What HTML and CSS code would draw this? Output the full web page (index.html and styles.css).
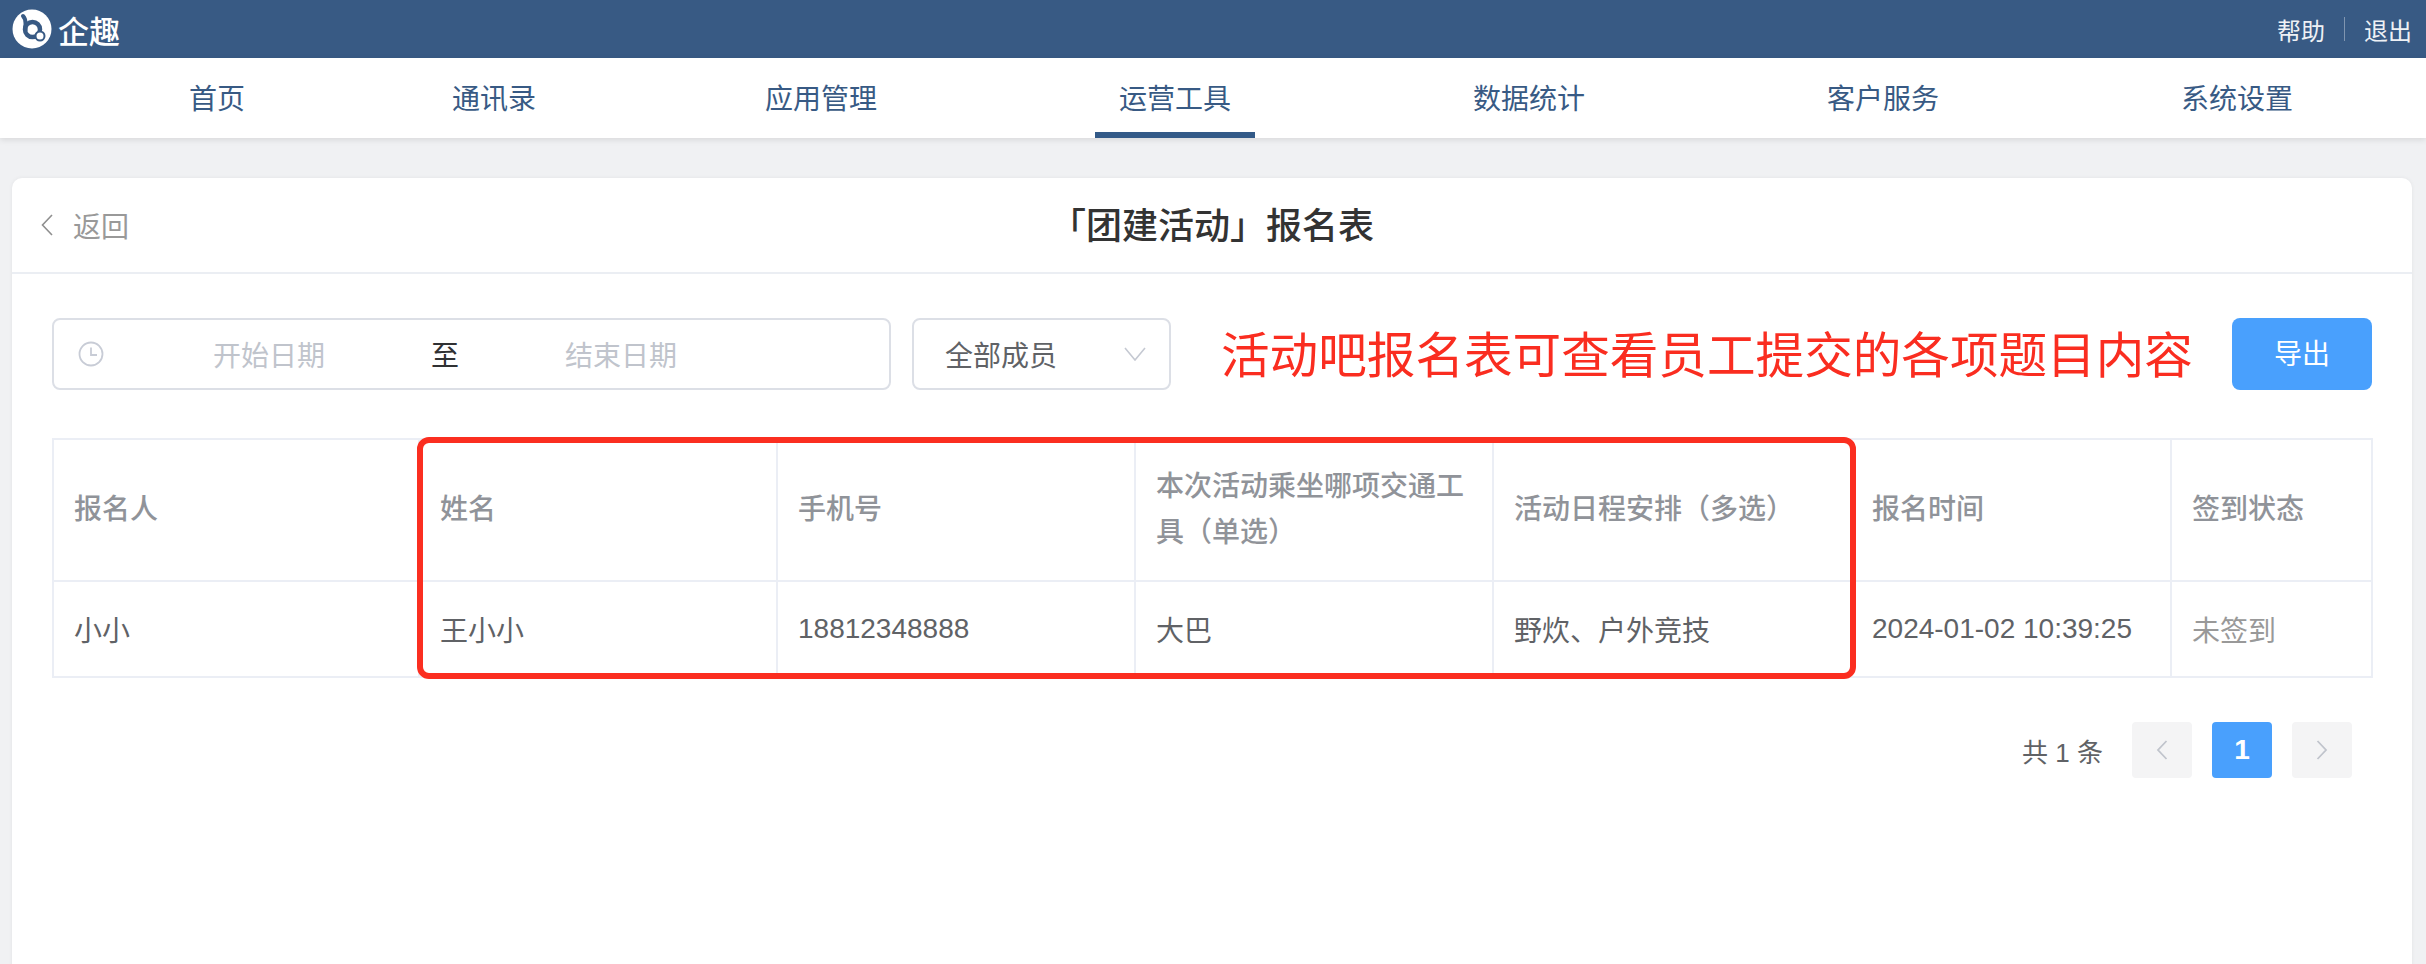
FILE: index.html
```html
<!DOCTYPE html>
<html lang="zh-CN">
<head>
    <meta charset="UTF-8">
    <title>「团建活动」报名表</title>
    <link rel="stylesheet" href="styles.css">
</head>
<body>
<div class="topbar">
    <div class="brand">
        <svg class="brandLogo" width="40" height="40" viewBox="0 0 40 40">
            <circle cx="20" cy="20" r="19.5" fill="#fff"/>
            <path d="M11 7 C13 9 13.5 11 13.5 14 L13.5 21" fill="none" stroke="#385a84" stroke-width="4" stroke-linecap="round"/>
            <circle cx="20.5" cy="20.5" r="7.5" fill="none" stroke="#385a84" stroke-width="4.5"/>
            <circle cx="28" cy="27" r="4.5" fill="#fff" stroke="#385a84" stroke-width="2"/>
        </svg>
        <span>企趣</span>
    </div>
    <div class="topLinks">
        <a>帮助</a><i></i><a>退出</a>
    </div>
</div>
<ul class="nav">
    <li class="navHome">首页</li>
    <li class="navContacts">通讯录</li>
    <li>应用管理</li>
    <li class="active"><span>运营工具</span></li>
    <li>数据统计</li>
    <li>客户服务</li>
    <li>系统设置</li>
</ul>
<div class="card">
    <div class="cardHead">
        <a class="back">
            <svg width="12" height="22" viewBox="0 0 12 22"><path d="M11 1 L1.5 11 L11 21" fill="none" stroke="#8f8f8f" stroke-width="1.6"/></svg>
            <span>返回</span>
        </a>
        <h1>「团建活动」报名表</h1>
    </div>
    <div class="cardBody">
        <div class="toolbar">
            <div class="dateRange">
                <svg class="clock" width="26" height="26" viewBox="0 0 26 26"><circle cx="13" cy="13" r="11.5" fill="none" stroke="#c8ccd6" stroke-width="1.8"/><path d="M13 6.5 V14 H19" fill="none" stroke="#c8ccd6" stroke-width="1.8"/></svg>
                <span class="dateHolder dateStart">开始日期</span>
                <span class="dateTo">至</span>
                <span class="dateHolder">结束日期</span>
            </div>
            <div class="select">
                <span>全部成员</span>
                <svg width="22" height="14" viewBox="0 0 22 14"><path d="M1 1 L11 13 L21 1" fill="none" stroke="#c5c9d2" stroke-width="1.6"/></svg>
            </div>
            <div class="notice">活动吧报名表可查看员工提交的各项题目内容</div>
            <a class="btnExport">导出</a>
        </div>
        <div class="tableWrap">
            <table>
                <colgroup>
                    <col class="c1"><col class="c2"><col class="c3"><col class="c4"><col class="c5"><col class="c6"><col class="c7">
                </colgroup>
                <tr class="headRow">
                    <th>报名人</th>
                    <th>姓名</th>
                    <th>手机号</th>
                    <th>本次活动乘坐哪项交通工具（单选）</th>
                    <th>活动日程安排（多选）</th>
                    <th>报名时间</th>
                    <th>签到状态</th>
                </tr>
                <tr class="bodyRow">
                    <td>小小</td>
                    <td>王小小</td>
                    <td>18812348888</td>
                    <td>大巴</td>
                    <td>野炊、户外竞技</td>
                    <td>2024-01-02 10:39:25</td>
                    <td class="muted">未签到</td>
                </tr>
            </table>
            <div class="redBox"></div>
        </div>
        <div class="pager">
            <span class="total">共 1 条</span>
            <a class="pageBtn"><svg width="12" height="22" viewBox="0 0 12 22"><path d="M10.5 2 L2 11 L10.5 20" fill="none" stroke="#c0c4cc" stroke-width="1.8"/></svg></a>
            <a class="pageBtn current">1</a>
            <a class="pageBtn"><svg width="12" height="22" viewBox="0 0 12 22"><path d="M1.5 2 L10 11 L1.5 20" fill="none" stroke="#c0c4cc" stroke-width="1.8"/></svg></a>
        </div>
    </div>
</div>
</body>
</html>
```

FILE: styles.css
```css
html,body{margin:0;padding:0;}
body{width:2426px;height:964px;overflow:hidden;background:#f0f1f3;font-family:"Liberation Sans","Noto Sans CJK SC",sans-serif;font-size:28px;color:#606266;}

.topbar{height:58px;background:#385a84;display:flex;justify-content:space-between;align-items:center;color:#fff;}
.brand{display:flex;align-items:center;padding-left:12px;font-size:31px;font-weight:500;}
.brandLogo{margin-right:6px;}
.topLinks{display:flex;align-items:center;padding-right:14px;font-size:24px;color:#eef1f5;}
.topLinks i{width:1px;height:24px;background:#7f95b0;margin:0 19px;}

.nav{display:flex;list-style:none;margin:0;padding:0 0 0 90px;height:80px;background:#fff;box-shadow:0 2px 6px rgba(0,0,0,.1);position:relative;color:#385a84;}
.nav li{width:354px;text-align:center;line-height:84px;}
.nav li.navHome{width:254px;}
.nav li.navContacts{width:300px;}
.nav li span{display:inline-block;width:160px;height:80px;box-sizing:border-box;border-bottom:6px solid #335a88;}

.card{margin:40px 14px 0 12px;height:800px;background:#fff;border-radius:10px;box-shadow:0 0 4px rgba(0,0,0,.06);}
.cardHead{height:94px;border-bottom:2px solid #ebeef3;display:flex;align-items:center;position:relative;}
.back{display:flex;align-items:center;padding-left:29px;color:#999;}
.back span{margin-left:20px;}
.cardHead h1{position:absolute;left:0;right:0;top:0;margin:0;text-align:center;font-size:36px;line-height:98px;font-weight:500;color:#333;}

.cardBody{padding:44px 40px 0;}
.toolbar{display:flex;align-items:center;height:72px;}
.dateRange{width:839px;height:72px;box-sizing:border-box;border:2px solid #dcdfe6;border-radius:8px;display:flex;align-items:center;padding-left:24px;}
.clock{flex:none;}
.dateHolder{width:112px;color:#c0c4cc;text-align:center;}
.dateStart{margin-left:109px;}
.dateTo{width:240px;text-align:center;color:#303133;}
.select{width:259px;height:72px;margin-left:21px;box-sizing:border-box;border:2px solid #dcdfe6;border-radius:8px;display:flex;align-items:center;justify-content:space-between;padding:0 23px 0 31px;}
.notice{margin:0 0 5px 50px;font-size:48.6px;white-space:nowrap;color:#fa2d20;flex:1;}
.btnExport{width:140px;height:72px;background:#49a0fd;border-radius:8px;color:#fff;text-align:center;line-height:74px;}

.tableWrap{position:relative;margin-top:48px;}
table{width:2319px;table-layout:fixed;border-collapse:collapse;}
th,td{border:2px solid #ebeef5;padding:0 20px;text-align:left;}
th{height:140px;line-height:46px;font-weight:500;color:#909399;}
td{height:94px;}
td.muted{color:#999;}
.c1{width:366px;}
.c2,.c3,.c4{width:358px;}
.c5{width:358px;}
.c6{width:320px;}
.c7{width:201px;}
.redBox{position:absolute;left:365px;top:-1px;width:1439px;height:242px;box-sizing:border-box;border:6px solid #fb2e20;border-radius:12px;}

.pager{display:flex;justify-content:flex-end;align-items:center;margin-top:44px;padding-right:20px;}
.total{margin-right:9px;font-size:26px;}
.pageBtn{display:flex;width:60px;height:56px;margin-left:20px;align-items:center;justify-content:center;background:#f4f4f5;border-radius:4px;}
.pageBtn.current{background:#49a0fd;color:#fff;font-weight:700;}
```
